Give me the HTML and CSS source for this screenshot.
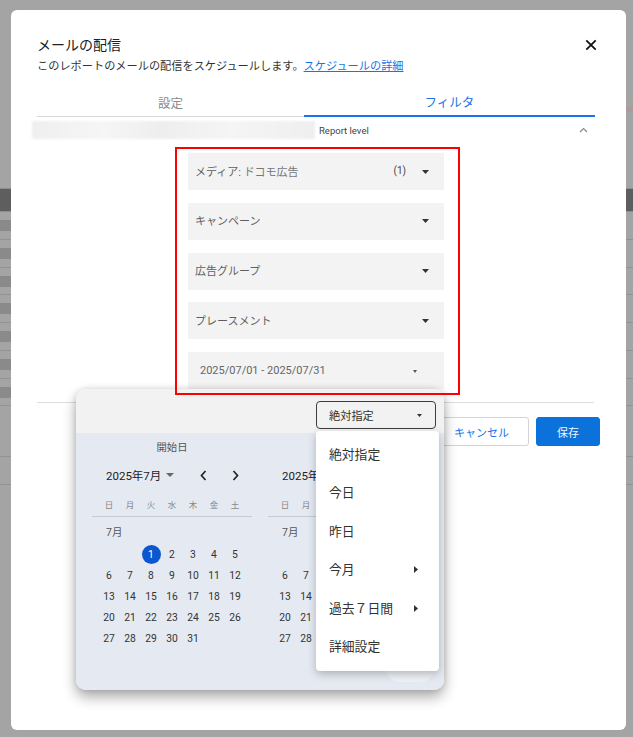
FILE: index.html
```html
<!DOCTYPE html>
<html lang="ja">
<head>
<meta charset="utf-8">
<title>メールの配信</title>
<link rel="stylesheet" href="styles.css">
</head>
<body>
<div class="app">
  <div class="app-top"><div class="app-accent"></div></div>
  <div class="app-band"></div>
  <div class="app-rows">
    <div class="app-row"><div class="app-cell"></div></div>
    <div class="app-row"><div class="app-cell"></div></div>
    <div class="app-row"><div class="app-cell"></div></div>
    <div class="app-row"><div class="app-cell"></div></div>
    <div class="app-row"><div class="app-cell"></div></div>
    <div class="app-row"><div class="app-cell"></div></div>
    <div class="app-row"><div class="app-cell"></div></div>
  </div>
  <div class="app-foot">
    <div class="app-line"></div>
    <div class="app-line"></div>
  </div>
</div>

<div class="modal">
  <div class="modal-head">
    <h1 class="modal-title">メールの配信</h1>
    <button class="close" aria-label="閉じる">
      <svg viewBox="0 0 12 12" width="12" height="12"><path d="M1.3 1.3L10.7 10.7M10.7 1.3L1.3 10.7" stroke="#111" stroke-width="1.8" fill="none"/></svg>
    </button>
  </div>
  <p class="modal-sub">このレポートのメールの配信をスケジュールします。<a href="#">スケジュールの詳細</a></p>

  <div class="tabs">
    <div class="tab">設定</div>
    <div class="tab tab-active">フィルタ</div>
  </div>

  <div class="level-row">
    <div class="blurred"></div>
    <span class="level-label">Report level</span>
    <svg class="caret-up" viewBox="0 0 9 6" width="9" height="6"><polyline points="1,5 4.5,1.5 8,5" fill="none" stroke="#8a8a8a" stroke-width="1.2"/></svg>
  </div>

  <div class="filters">
    <div class="select">
      <span class="select-label">メディア: <span class="select-value">ドコモ広告</span></span>
      <span class="count">(1)</span>
      <svg class="tri" viewBox="0 0 7 4" width="7" height="4"><polygon points="0,0 7,0 3.5,4" fill="#333"/></svg>
    </div>
    <div class="select">
      <span class="select-label">キャンペーン</span>
      <svg class="tri tri-auto" viewBox="0 0 7 4" width="7" height="4"><polygon points="0,0 7,0 3.5,4" fill="#333"/></svg>
    </div>
    <div class="select">
      <span class="select-label">広告グループ</span>
      <svg class="tri tri-auto" viewBox="0 0 7 4" width="7" height="4"><polygon points="0,0 7,0 3.5,4" fill="#333"/></svg>
    </div>
    <div class="select">
      <span class="select-label">プレースメント</span>
      <svg class="tri tri-auto" viewBox="0 0 7 4" width="7" height="4"><polygon points="0,0 7,0 3.5,4" fill="#333"/></svg>
    </div>
    <div class="select select-date">
      <span class="date-text">2025/07/01 - 2025/07/31</span>
      <svg class="tri tri-auto" viewBox="0 0 4 3" width="4" height="3"><polygon points="0,0 4,0 2,3" fill="#555"/></svg>
    </div>
  </div>

  <div class="divider"></div>

  <div class="actions">
    <button class="btn btn-outline">キャンセル</button>
    <button class="btn btn-primary">保存</button>
  </div>

  <div class="highlight"></div>

  <div class="picker">
    <div class="picker-head">
      <div class="range">
        <span>絶対指定</span>
        <svg class="tri-xs" viewBox="0 0 5 3" width="5" height="3"><polygon points="0,0 5,0 2.5,3" fill="#333"/></svg>
        <div class="menu">
          <div class="menu-item">絶対指定</div>
          <div class="menu-item">今日</div>
          <div class="menu-item">昨日</div>
          <div class="menu-item">今月<svg class="sub" viewBox="0 0 4 7" width="4" height="7"><polygon points="0,0 4,3.5 0,7" fill="#333"/></svg></div>
          <div class="menu-item">過去７日間<svg class="sub" viewBox="0 0 4 7" width="4" height="7"><polygon points="0,0 4,3.5 0,7" fill="#333"/></svg></div>
          <div class="menu-item">詳細設定</div>
        </div>
      </div>
    </div>
    <div class="picker-body">
      <div class="cals">
        <div class="cal">
          <div class="cal-title">開始日</div>
          <div class="cal-nav">
            <span class="cal-month-label">2025年7月</span>
            <svg class="cal-tri" viewBox="0 0 8 4" width="8" height="4"><polygon points="0,0 8,0 4,4" fill="#666"/></svg>
            <div class="nav-btns">
              <span class="nav-btn"><svg viewBox="0 0 7 11" width="7" height="11"><polyline points="5.5,1 1.5,5.5 5.5,10" fill="none" stroke="#222" stroke-width="1.7"/></svg></span>
              <span class="nav-btn"><svg viewBox="0 0 7 11" width="7" height="11"><polyline points="1.5,1 5.5,5.5 1.5,10" fill="none" stroke="#222" stroke-width="1.7"/></svg></span>
            </div>
          </div>
          <div class="cal-week"><span>日</span><span>月</span><span>火</span><span>水</span><span>木</span><span>金</span><span>土</span></div>
          <div class="cal-month">7月</div>
          <div class="cal-days">
            <span></span><span></span><span><b class="day-sel">1</b></span><span>2</span><span>3</span><span>4</span><span>5</span>
            <span>6</span><span>7</span><span>8</span><span>9</span><span>10</span><span>11</span><span>12</span>
            <span>13</span><span>14</span><span>15</span><span>16</span><span>17</span><span>18</span><span>19</span>
            <span>20</span><span>21</span><span>22</span><span>23</span><span>24</span><span>25</span><span>26</span>
            <span>27</span><span>28</span><span>29</span><span>30</span><span>31</span>
          </div>
        </div>
        <!-- end-date calendar: the columns under the open menu are covered and not drawn -->
        <div class="cal">
          <div class="cal-title"></div>
          <div class="cal-nav">
            <span class="cal-month-label">2025年7月</span>
            <svg class="cal-tri" viewBox="0 0 8 4" width="8" height="4"><polygon points="0,0 8,0 4,4" fill="#666"/></svg>
            <div class="nav-btns">
              <span class="nav-btn"></span>
              <span class="nav-btn"></span>
            </div>
          </div>
          <div class="cal-week"><span>日</span><span>月</span><span></span><span></span><span></span><span></span><span></span></div>
          <div class="cal-month">7月</div>
          <div class="cal-days">
            <span></span><span></span><span></span><span></span><span></span><span></span><span></span>
            <span>6</span><span>7</span><span></span><span></span><span></span><span></span><span></span>
            <span>13</span><span>14</span><span></span><span></span><span></span><span></span><span></span>
            <span>20</span><span>21</span><span></span><span></span><span></span><span></span><span></span>
            <span>27</span><span>28</span><span></span><span></span><span></span><span></span><span></span>
          </div>
        </div>
      </div>
      <div class="picker-foot">
        <button class="foot-btn foot-apply"></button>
      </div>
    </div>
  </div>
</div>
</body>
</html>
```

FILE: styles.css
```css
* { box-sizing: border-box; }
html, body { margin: 0; padding: 0; }
body {
  width: 633px;
  height: 737px;
  overflow: hidden;
  position: relative;
  background: #a4a4a4;
  font-family: Roboto, "Noto Sans CJK JP", sans-serif;
}

/* background application (dimmed) */
.app { height: 737px; }
.app-top {
  height: 188px;
  display: flex;
  justify-content: flex-end;
  align-items: flex-start;
  padding-top: 107px;
}
.app-accent { width: 30px; height: 5px; background: #ad9a9a; }
.app-band {
  height: 24px;
  background: #5e5e5e;
  border-top: 1px solid #8e8e8e;
  border-bottom: 1px solid #8e8e8e;
}
.app-row {
  height: 27.75px;
  padding-top: 8px;
  border-bottom: 1px solid #939393;
}
.app-cell { width: 60px; height: 11px; background: #8a8a8a; }
.app-foot { padding-top: 23px; }
.app-line { height: 28px; border-bottom: 1px solid #939393; }

/* modal */
.modal {
  position: absolute;
  left: 11px;
  top: 10px;
  width: 615px;
  height: 720px;
  background: #fff;
  border-radius: 6px;
  padding: 26px 26px 0 26px;
}
.modal-head {
  display: flex;
  justify-content: space-between;
  align-items: center;
  height: 18px;
}
.modal-title {
  margin: 0;
  font-size: 14px;
  font-weight: 400;
  line-height: 18px;
  color: #202124;
}
.close {
  width: 12px;
  height: 12px;
  margin-right: 3px;
  padding: 0;
  border: 0;
  background: none;
  display: block;
}
.close svg { display: block; }
.modal-sub {
  margin: 5px 0 0;
  font-size: 11.2px;
  line-height: 16px;
  color: #333;
}
.modal-sub a { color: #1a73e8; text-decoration: underline; }

.tabs {
  margin-top: 13px;
  display: grid;
  grid-template-columns: 267px 291px;
}
.tab {
  height: 29px;
  display: flex;
  align-items: center;
  justify-content: center;
  font-size: 12.5px;
  color: #8a8a8a;
  border-bottom: 1px solid #dadada;
}
.tab-active { color: #1a73e8; border-bottom: 2px solid #1a73e8; }

.level-row {
  margin-top: 4px;
  height: 18px;
  display: flex;
  align-items: center;
}
.blurred {
  width: 283px;
  height: 18px;
  margin-left: -5px;
  background: linear-gradient(90deg, #efefef 0%, #f6f6f6 25%, #eeeeee 45%, #f5f5f5 70%, #efefef 100%);
  filter: blur(1px);
}
.level-label {
  margin-left: 4px;
  font-size: 9.5px;
  color: #444;
}
.caret-up { margin-left: auto; margin-right: 12px; display: block; }

.filters {
  margin-top: 14px;
  margin-left: 151px;
  width: 256px;
  display: flex;
  flex-direction: column;
  gap: 12.75px;
}
.select {
  height: 37px;
  background: #f3f3f3;
  display: flex;
  align-items: center;
  padding: 0 15px 2px 7px;
  font-size: 11px;
  color: #5f5f5f;
}
.select .tri { margin-top: 2px; }
.select-value { color: #777; }
.count {
  margin-left: auto;
  margin-right: 16px;
  font-size: 10px;
  color: #444;
}
.tri { display: block; }
.tri-auto { margin-left: auto; }
.select-date { padding: 0 27px 1px 12px; }
.date-text { color: #666; font-size: 11px; }

.divider {
  margin-top: 13px;
  width: 557px;
  height: 1px;
  background: #dedede;
}
.actions {
  margin-top: 14px;
  display: flex;
  justify-content: flex-end;
  gap: 7px;
}
.btn {
  height: 29px;
  padding: 0;
  border-radius: 3px;
  font-family: inherit;
  font-size: 11px;
}
.btn-outline {
  width: 95px;
  background: #fff;
  color: #1a73e8;
  border: 1px solid #d4d4d4;
}
.btn-primary {
  width: 64px;
  background: #0b72dc;
  color: #f2f6fc;
  border: 1px solid #0b72dc;
}

.highlight {
  position: absolute;
  left: 164px;
  top: 137px;
  width: 285px;
  height: 248px;
  border: 2px solid #ff0000;
  z-index: 5;
  pointer-events: none;
}

/* date picker popover */
.picker {
  position: absolute;
  left: 65px;
  top: 379px;
  width: 368px;
  height: 301px;
  border-radius: 10px;
  box-shadow: 0 7px 14px rgba(0, 0, 0, 0.33), 0 0 6px rgba(0, 0, 0, 0.12);
  display: flex;
  flex-direction: column;
  z-index: 3;
}
.picker-head {
  height: 44px;
  flex: none;
  background: #f2f2f2;
  border-radius: 10px 10px 0 0;
  display: flex;
  justify-content: flex-end;
  align-items: flex-start;
  padding: 12px 8px 0 0;
}
.range {
  position: relative;
  width: 120px;
  height: 28px;
  border: 1px solid #3d3d3d;
  border-radius: 4px;
  display: flex;
  align-items: center;
  padding: 0 13px 0 12px;
  font-size: 11.2px;
  color: #333;
}
.tri-xs { margin-left: auto; display: block; }
.menu {
  position: absolute;
  left: -1px;
  top: calc(100% + 3px);
  width: 123px;
  background: #fff;
  border-radius: 4px;
  box-shadow: 0 3px 8px rgba(0, 0, 0, 0.25);
  padding: 4px 0 5px;
  z-index: 4;
}
.menu-item {
  height: 38.5px;
  display: flex;
  align-items: center;
  padding: 0 21px 2px 13px;
  font-size: 12.8px;
  color: #333;
}
.menu-item .sub { margin-left: auto; margin-top: 2px; display: block; }

.picker-body {
  flex: 1;
  background: #e5eaf2;
  border-radius: 0 0 10px 10px;
  display: flex;
  flex-direction: column;
  padding: 0 16px;
}
.cals { display: flex; gap: 16px; }
.cal { width: 160px; }
.cal-title {
  margin-top: 8px;
  height: 14px;
  line-height: 14px;
  text-align: center;
  font-size: 10.3px;
  color: #555;
}
.cal-nav {
  margin-top: 10px;
  height: 20px;
  display: flex;
  align-items: center;
  padding-left: 14px;
}
.cal-month-label { font-size: 11.5px; color: #222; }
.cal-tri { margin-left: 5px; display: block; }
.nav-btns {
  margin-left: auto;
  margin-right: 4.5px;
  display: flex;
  gap: 8px;
}
.nav-btn {
  width: 24px;
  height: 20px;
  display: flex;
  align-items: center;
  justify-content: center;
}
.nav-btn svg { display: block; }
.cal-week {
  margin-top: 12px;
  height: 20px;
  padding-bottom: 4px;
  border-bottom: 1px solid #c6cbd3;
  display: grid;
  grid-template-columns: repeat(7, 21px);
  justify-content: center;
  align-items: center;
  font-size: 8.5px;
  color: #888;
}
.cal-week span { text-align: center; line-height: 16px; }
.cal-month {
  margin-top: 9px;
  height: 14px;
  line-height: 14px;
  padding-left: 14px;
  font-size: 10.5px;
  color: #555;
}
.cal-days {
  margin-top: 3.5px;
  display: grid;
  grid-template-columns: repeat(7, 21px);
  grid-auto-rows: 21px;
  justify-content: center;
  font-size: 10.3px;
  color: #333;
}
.cal-days span {
  display: flex;
  align-items: center;
  justify-content: center;
}
.day-sel {
  width: 19px;
  height: 19px;
  border-radius: 50%;
  background: #0b57d0;
  color: #fff;
  font-weight: 400;
  display: flex;
  align-items: center;
  justify-content: center;
}
.picker-foot {
  margin-top: auto;
  margin-right: -6px;
  padding-bottom: 8px;
  display: flex;
  justify-content: flex-end;
  align-items: center;
}
.foot-btn {
  height: 28px;
  border: 0;
  border-radius: 14px;
  font-family: inherit;
}
.foot-apply { width: 48px; padding: 0; background: #eef1f6; }
```
